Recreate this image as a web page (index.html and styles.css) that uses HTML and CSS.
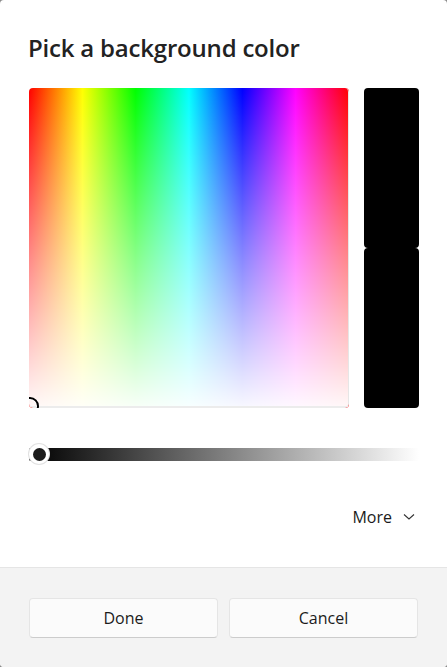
FILE: index.html
```html
<!DOCTYPE html>
<html lang="en">
<head>
<meta charset="UTF-8">
<meta name="viewport" content="width=device-width, initial-scale=1.0">
<title>Pick a background color</title>
<link rel="stylesheet" href="styles.css">
</head>
<body>
<div class="dialog">
  <div class="content">
    <h1 class="title">Pick a background color</h1>
    <div class="picker">
      <div class="spectrum">
        <div class="spectrum-white"></div>
        <div class="spectrum-thumb"></div>
      </div>
      <div class="preview">
        <div class="preview-part"></div>
        <div class="preview-part"></div>
      </div>
    </div>
    <div class="slider">
      <div class="slider-track"></div>
      <div class="slider-thumb"><div class="slider-dot"></div></div>
    </div>
    <div class="more-row">
      <span class="more">More</span>
      <svg class="chevron" width="12" height="8" viewBox="0 0 12 8">
        <path d="M1 1.5 L6 6 L11 1.5" fill="none" stroke="#333" stroke-width="1.1"/>
      </svg>
    </div>
  </div>
  <div class="footer">
    <button class="btn">Done</button>
    <button class="btn">Cancel</button>
  </div>
</div>
</body>
</html>
```

FILE: styles.css
```css
body {
  margin: 0;
  background-color: #8a8a8a;
  font-family: "Open Sans", "Noto Sans", sans-serif;
  color: #1b1b1b;
}
.dialog {
  width: 447px;
  height: 667px;
  background-color: #fff;
  border-radius: 4px;
  overflow: hidden;
  display: flex;
  flex-direction: column;
}
.content {
  padding: 0 28px 0 29px;
}
.title {
  margin: 31px 0 0 -1px;
  font-size: 24px;
  font-weight: 600;
  line-height: 34px;
  color: #222;
  letter-spacing: -0.2px;
}
.picker {
  display: flex;
  gap: 15px;
  margin-top: 23px;
}
.spectrum {
  position: relative;
  width: 320px;
  height: 320px;
  border-radius: 4px;
  overflow: hidden;
  background: linear-gradient(to right, #ff0000, #ffff00 16.7%, #00ff00 33.3%, #00ffff 50%, #0000ff 66.7%, #ff00ff 83.3%, #ff0000);
}
.spectrum-white {
  position: absolute;
  inset: 0;
  background: linear-gradient(to bottom, rgba(255,255,255,0) 0%, rgba(255,255,255,0.55) 55%, rgba(255,255,255,0.97) 100%);
  border-right: 1px solid #e6e6e6;
  border-bottom: 2px solid #ececec;
  border-radius: 4px;
}
.spectrum-thumb {
  position: absolute;
  left: -8px;
  bottom: -7px;
  width: 14px;
  height: 14px;
  border: 2px solid #000;
  border-radius: 50%;
  box-shadow: inset 0 0 0 1px #fff;
}
.preview {
  display: flex;
  flex-direction: column;
  width: 55px;
  height: 320px;
}
.preview-part {
  flex: 1;
  background-color: #000;
  border-radius: 4px;
}
.slider {
  position: relative;
  margin-top: 40px;
  width: 390px;
  height: 13px;
}
.slider-track {
  height: 13px;
  border-radius: 2px;
  background: linear-gradient(to right, #000, #fff);
}
.slider-thumb {
  position: absolute;
  left: 0;
  top: -4px;
  width: 20px;
  height: 20px;
  border-radius: 50%;
  background-color: #fff;
  box-shadow: 0 0 0 1px #e2e2e2;
  display: flex;
  align-items: center;
  justify-content: center;
}
.slider-dot {
  width: 13px;
  height: 13px;
  border-radius: 50%;
  background-color: #1b1b1b;
}
.more-row {
  display: flex;
  justify-content: flex-end;
  align-items: center;
  gap: 11px;
  margin-top: 44px;
  padding-right: 4px;
}
.more {
  font-size: 16px;
  line-height: 24px;
}
.chevron {
  display: block;
}
.footer {
  margin-top: auto;
  height: 100px;
  background-color: #f3f3f3;
  border-top: 1px solid #e5e5e5;
  display: grid;
  grid-template-columns: 1fr 1fr;
  gap: 11px;
  padding: 30px 29px 0 29px;
  box-sizing: border-box;
  align-content: start;
}
.btn {
  height: 40px;
  font-family: "Open Sans", "Noto Sans", sans-serif;
  font-size: 16px;
  color: #1b1b1b;
  background-color: #fbfbfb;
  border: 1px solid #e5e5e5;
  border-bottom-color: #cccccc;
  border-radius: 4px;
}
```
